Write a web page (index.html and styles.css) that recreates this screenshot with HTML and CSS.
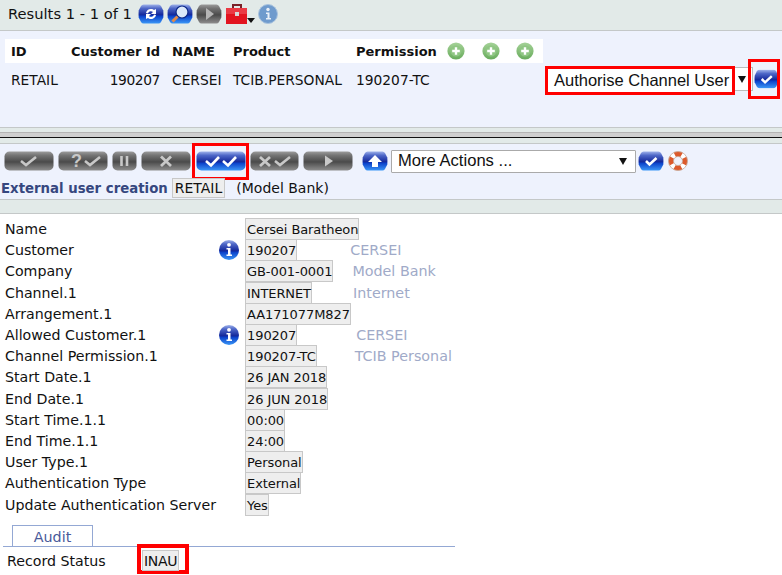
FILE: index.html
```html
<!DOCTYPE html>
<html lang="en">
<head>
    <meta charset="UTF-8">
    <title>External user creation</title>
    <link rel="stylesheet" href="styles.css">
</head>
<body>
    <svg class="defs" width="0" height="0">
        <defs>
            <linearGradient id="blueBtn" x1="0" y1="0" x2="0" y2="1">
                <stop offset="0" stop-color="#9fb2ea"/>
                <stop offset="0.2" stop-color="#4f68c8"/>
                <stop offset="0.55" stop-color="#12279a"/>
                <stop offset="0.6" stop-color="#0a3fc8"/>
                <stop offset="1" stop-color="#3b97f7"/>
            </linearGradient>
            <linearGradient id="greyBtn" x1="0" y1="0" x2="0" y2="1">
                <stop offset="0" stop-color="#9c9c9c"/>
                <stop offset="0.2" stop-color="#747474"/>
                <stop offset="0.55" stop-color="#4a4a4a"/>
                <stop offset="0.62" stop-color="#565656"/>
                <stop offset="1" stop-color="#8e8e8e"/>
            </linearGradient>
            <linearGradient id="greenBtn" x1="0" y1="0" x2="0" y2="1">
                <stop offset="0" stop-color="#a5d298"/>
                <stop offset="1" stop-color="#68ab5c"/>
            </linearGradient>
            <symbol id="hexBlue" viewBox="0 0 26 20">
                <path d="M5.500 0.500H20.500Q22 0.500 23 2L25.300 6.500Q25.600 10 25.300 13.500L23 18Q22 19.500 20.500 19.500H5.500Q4 19.500 3 18L0.700 13.500Q0.400 10 0.700 6.500L3 2Q4 0.500 5.500 0.500Z" fill="url(#blueBtn)"/>
            </symbol>
            <symbol id="hexGrey" viewBox="0 0 26 20">
                <path d="M5.500 0.500H20.500Q22 0.500 23 2L25.300 6.500Q25.600 10 25.300 13.500L23 18Q22 19.500 20.500 19.500H5.500Q4 19.500 3 18L0.700 13.500Q0.400 10 0.700 6.500L3 2Q4 0.500 5.500 0.500Z" fill="url(#greyBtn)"/>
            </symbol>
            <symbol id="plus" viewBox="0 0 18 18">
                <circle cx="9" cy="9" r="8.600" fill="url(#greenBtn)"/>
                <circle cx="9" cy="9" r="5.500" fill="#8fc683"/>
                <path d="M9 5.200V12.800M5.200 9H12.800" stroke="#fff" stroke-width="2.400"/>
            </symbol>
            <symbol id="infoBlue" viewBox="0 0 20 20">
                <circle cx="10" cy="10" r="10" fill="url(#blueBtn)"/>
                <circle cx="10" cy="4.800" r="1.900" fill="#fff"/>
                <path d="M7.500 8H11.500V14.500H13V16H7.500V14.500H9V9.500H7.500Z" fill="#fff"/>
            </symbol>
        </defs>
    </svg>

    <div class="results-bar">
        <span class="results-text">Results 1 - 1 of 1</span>
        <svg class="hex-icon" viewBox="0 0 26 20">
            <use href="#hexBlue"/>
            <path d="M8 9A5 5 0 0 1 16 6L18 5V10H13L15 8A3 3 0 0 0 10 9.500Z" fill="#fff"/>
            <path d="M18 11A5 5 0 0 1 10 14L8 15V10H13L11 12A3 3 0 0 0 16 10.500Z" fill="#fff"/>
        </svg>
        <svg class="hex-icon" viewBox="0 0 26 20">
            <use href="#hexBlue"/>
            <circle cx="15" cy="8" r="6" fill="#dbe8fa" stroke="#0d2a8a" stroke-width="1.200"/>
            <path d="M10.500 12.500L5.500 17.500" stroke="#e0894a" stroke-width="3"/>
        </svg>
        <svg class="hex-icon" viewBox="0 0 26 20">
            <use href="#hexGrey"/>
            <path d="M10 4L18 10L10 16Z" fill="#b5b5b5"/>
        </svg>
        <svg class="toolbox" viewBox="0 0 30 20">
            <path d="M7 4V1H15V4" fill="none" stroke="#7a2028" stroke-width="2"/>
            <rect x="0" y="4" width="21" height="16" fill="#e2141f"/>
            <rect x="0" y="4" width="21" height="6" fill="#ea3a44"/>
            <rect x="9" y="8" width="4" height="4" fill="#d9d9d9"/>
            <path d="M21 14H29L25 19Z" fill="#111"/>
        </svg>
        <svg class="info-pale" viewBox="0 0 20 20">
            <circle cx="10" cy="10" r="9.500" fill="#6f9bcd" stroke="#a9c3de"/>
            <circle cx="10" cy="5.500" r="1.700" fill="#e9f0f8"/>
            <path d="M8 8.500H11.500V14H13V15.500H8V14H9.500V10H8Z" fill="#e9f0f8"/>
        </svg>
    </div>

    <div class="list-panel">
        <table class="list-table">
            <tr class="list-head">
                <th class="col-id">ID</th>
                <th class="col-cust">Customer Id</th>
                <th class="col-name">NAME</th>
                <th class="col-prod">Product</th>
                <th class="col-perm">Permission</th>
                <th class="col-add">
                    <svg class="plus-icon" viewBox="0 0 18 18"><use href="#plus"/></svg>
                    <svg class="plus-icon" viewBox="0 0 18 18"><use href="#plus"/></svg>
                    <svg class="plus-icon" viewBox="0 0 18 18"><use href="#plus"/></svg>
                </th>
            </tr>
            <tr>
                <td>RETAIL</td>
                <td class="num">190207</td>
                <td>CERSEI</td>
                <td>TCIB.PERSONAL</td>
                <td>190207-TC</td>
                <td></td>
            </tr>
        </table>
        <div class="row-action">
            <div class="marked select-mark">
                <div class="channel-select">Authorise Channel User</div>
            </div>
            <div class="select-arrow"><span class="arrow"></span></div>
            <div class="marked go-mark">
                <svg class="hex-icon" viewBox="0 0 26 20">
                    <use href="#hexBlue"/>
                    <path d="M8 10L11.500 13.500L18.500 7" fill="none" stroke="#fff" stroke-width="2.600"/>
                </svg>
            </div>
        </div>
    </div>

    <div class="splitter">
        <div class="splitter-bar"></div>
    </div>

    <div class="tool-panel">
        <div class="tool-row">
            <svg class="pill w50" viewBox="0 0 50 20"><rect x="0.500" y="0.500" width="49" height="19" rx="5" fill="url(#greyBtn)"/><path d="M17 10L22 14L32 6" fill="none" stroke="#c8c8c8" stroke-width="2.600"/></svg>
            <svg class="pill w50" viewBox="0 0 50 20"><rect x="0.500" y="0.500" width="49" height="19" rx="5" fill="url(#greyBtn)"/><text x="13" y="15.500" class="pill-mark">?</text><path d="M27 10L32 14L42 6" fill="none" stroke="#c8c8c8" stroke-width="2.600"/></svg>
            <svg class="pill w25" viewBox="0 0 25 20"><rect x="0.500" y="0.500" width="24" height="19" rx="5" fill="url(#greyBtn)"/><path d="M9.500 5V15M15 5V15" stroke="#c8c8c8" stroke-width="2.600"/></svg>
            <svg class="pill w50" viewBox="0 0 50 20"><rect x="0.500" y="0.500" width="49" height="19" rx="5" fill="url(#greyBtn)"/><path d="M20 5.500L30 15M30 5.500L20 15" stroke="#c8c8c8" stroke-width="2.800"/></svg>
            <div class="marked pill-mark-box">
                <svg class="pill w50" viewBox="0 0 50 20"><rect x="0.500" y="0.500" width="49" height="19" rx="5" fill="url(#blueBtn)"/><path d="M10 10L15 14.500L23 6M27 10L32 14.500L40 6" fill="none" stroke="#fff" stroke-width="2.600"/></svg>
            </div>
            <svg class="pill w49" viewBox="0 0 49 20"><rect x="0.500" y="0.500" width="48" height="19" rx="5" fill="url(#greyBtn)"/><path d="M10 6L20 15M20 6L10 15" stroke="#c8c8c8" stroke-width="2.800"/><path d="M25 10L30 14L40 6" fill="none" stroke="#c8c8c8" stroke-width="2.600"/></svg>
            <svg class="pill w50" viewBox="0 0 50 20"><rect x="0.500" y="0.500" width="49" height="19" rx="5" fill="url(#greyBtn)"/><path d="M22 4.500L30 10L22 15.500Z" fill="#c8c8c8"/></svg>
            <svg class="hex-icon up-icon" viewBox="0 0 26 20">
                <use href="#hexBlue"/>
                <path d="M13 4L20 11H16V16H10V11H6Z" fill="#fff"/>
            </svg>
            <div class="more-select">
                <span>More Actions ...</span>
                <span class="arrow"></span>
            </div>
            <svg class="hex-icon confirm-icon" viewBox="0 0 26 20">
                <use href="#hexBlue"/>
                <path d="M8 10L11.500 13.500L18.500 7" fill="none" stroke="#fff" stroke-width="2.600"/>
            </svg>
            <svg class="ring" viewBox="0 0 20 20">
                <circle cx="10" cy="10" r="7" fill="none" stroke="#fff" stroke-width="5"/>
                <circle cx="10" cy="10" r="7" fill="none" stroke="#dc5a2c" stroke-width="5" stroke-dasharray="7 3.996" stroke-dashoffset="3.500"/>
                <circle cx="10" cy="10" r="9.500" fill="none" stroke="#c4a898" stroke-width="0.800"/>
                <circle cx="10" cy="10" r="4.500" fill="none" stroke="#c4a898" stroke-width="0.800"/>
            </svg>
        </div>
        <div class="title-row">
            <span class="page-title">External user creation</span>
            <span class="value-box">RETAIL</span>
            <span class="company">(Model Bank)</span>
        </div>
    </div>
    <div class="title-strip"></div>

    <div class="form-grid">
        <span class="field-label">Name</span><span></span><span class="field"><span class="value-box">Cersei Baratheon</span></span>
        <span class="field-label">Customer</span><svg class="info-icon" viewBox="0 0 20 20"><use href="#infoBlue"/></svg><span class="field"><span class="value-box">190207</span><span class="enrich gap-53">CERSEI</span></span>
        <span class="field-label">Company</span><span></span><span class="field"><span class="value-box">GB-001-0001</span><span class="enrich gap-19">Model Bank</span></span>
        <span class="field-label">Channel.1</span><span></span><span class="field"><span class="value-box">INTERNET</span><span class="enrich gap-41">Internet</span></span>
        <span class="field-label">Arrangement.1</span><span></span><span class="field"><span class="value-box">AA171077M827</span></span>
        <span class="field-label">Allowed Customer.1</span><svg class="info-icon" viewBox="0 0 20 20"><use href="#infoBlue"/></svg><span class="field"><span class="value-box">190207</span><span class="enrich gap-59">CERSEI</span></span>
        <span class="field-label">Channel Permission.1</span><span></span><span class="field"><span class="value-box">190207-TC</span><span class="enrich gap-38">TCIB Personal</span></span>
        <span class="field-label">Start Date.1</span><span></span><span class="field"><span class="value-box">26 JAN 2018</span></span>
        <span class="field-label">End Date.1</span><span></span><span class="field"><span class="value-box">26 JUN 2018</span></span>
        <span class="field-label">Start Time.1.1</span><span></span><span class="field"><span class="value-box">00:00</span></span>
        <span class="field-label">End Time.1.1</span><span></span><span class="field"><span class="value-box">24:00</span></span>
        <span class="field-label">User Type.1</span><span></span><span class="field"><span class="value-box">Personal</span></span>
        <span class="field-label">Authentication Type</span><span></span><span class="field"><span class="value-box">External</span></span>
        <span class="field-label">Update Authentication Server</span><span></span><span class="field"><span class="value-box">Yes</span></span>
    </div>

    <div class="tab-bar">
        <div class="tab">Audit</div>
    </div>
    <div class="audit-row">
        <span class="field-label audit-label">Record Status</span>
        <div class="marked status-mark"><span class="value-box">INAU</span></div>
    </div>
</body>
</html>
```

FILE: styles.css
```css
body {
    margin: 0;
    height: 575px;
    overflow: hidden;
    background-color: #fff;
    color: #111;
    font-family: "DejaVu Sans", Verdana, sans-serif;
    font-size: 14px;
    white-space: nowrap;
}
.defs {
    display: block;
    height: 0;
}
.results-bar {
    display: flex;
    align-items: center;
    gap: 3px;
    height: 31px;
    padding-left: 8px;
    padding-bottom: 3px;
    box-sizing: border-box;
    background-color: #e2eae8;
    border-bottom: 1px solid #c4c8c8;
}
.results-text {
    font-size: 14.7px;
    margin-right: 3px;
}
.hex-icon {
    width: 26px;
    height: 20px;
    flex: none;
}
.toolbox {
    width: 30px;
    height: 20px;
    margin-left: 1px;
    margin-right: -1px;
}
.info-pale {
    width: 20px;
    height: 20px;
}

/* list of matching records */
.list-panel {
    display: flex;
    align-items: flex-start;
    height: 97px;
    box-sizing: border-box;
    padding: 8px 0 0 5px;
    background-color: #eef2fd;
    border-bottom: 1px solid #c4c8c8;
}
.list-table {
    border-collapse: collapse;
    table-layout: fixed;
    width: 538px;
    flex: none;
}
.list-table th {
    background-color: #fff;
    height: 24px;
    text-align: left;
    padding: 0 0 0 6px;
    font-size: 13px;
    font-weight: bold;
}
.list-table td {
    height: 33px;
    padding: 0 0 0 6px;
    font-size: 13.8px;
}
.list-table .num {
    text-align: right;
    padding-right: 6px;
    letter-spacing: -0.4px;
}
.col-id { width: 54px; }
.col-cust { width: 95px; }
.col-name { width: 55px; }
.col-prod { width: 117px; }
.col-perm { width: 85px; }
.list-table .col-add {
    display: flex;
    align-items: center;
    gap: 16.5px;
}
.plus-icon {
    width: 18px;
    height: 18px;
    flex: none;
}
.row-action {
    display: flex;
    align-items: center;
    margin: 20px 0 0 2px;
}
.marked {
    border: 3px solid #f00;
    box-sizing: border-box;
    flex: none;
}
.select-mark {
    width: 190px;
    height: 29px;
    margin-top: 3px;
    background-color: #fff;
}
.channel-select {
    font-family: "Liberation Sans", Arial, sans-serif;
    font-size: 16.5px;
    line-height: 23px;
    padding-left: 6px;
    color: #111;
}
.select-arrow {
    display: flex;
    align-items: center;
    justify-content: center;
    width: 18px;
    height: 24px;
    flex: none;
    box-sizing: border-box;
    padding-right: 4px;
    background-color: #fff;
    border: 1px solid #bbb;
    border-left: none;
}
.arrow {
    width: 0;
    height: 0;
    border-left: 4px solid transparent;
    border-right: 4px solid transparent;
    border-top: 7px solid #111;
}
.go-mark {
    display: flex;
    align-items: center;
    width: 32px;
    height: 40px;
    margin-left: -5px;
    padding-left: 3px;
    overflow: hidden;
}
.go-mark .hex-icon {
    width: 25px;
}

/* drag bar between the list and the record */
.splitter {
    height: 16px;
    box-sizing: border-box;
    padding-top: 4px;
    background-color: #e2eae8;
    border-bottom: 1px solid #c4c8c8;
}
.splitter-bar {
    height: 6px;
    box-sizing: border-box;
    background-color: #cfcfcf;
    border-top: 1px solid #b4b4b4;
    border-bottom: 1px solid #111;
}

.tool-panel {
    height: 56px;
    box-sizing: border-box;
    background-color: #eef2fd;
    border-bottom: 1px solid #c4c8c8;
}
.tool-row {
    display: flex;
    align-items: center;
    gap: 4px;
    height: 34px;
    padding-left: 4px;
}
.pill {
    height: 20px;
    display: block;
    flex: none;
}
.w50 { width: 50px; }
.w49 { width: 49px; }
.w25 { width: 25px; }
.pill-mark {
    font-family: "Liberation Sans", Arial, sans-serif;
    font-size: 18px;
    font-weight: bold;
    fill: #c8c8c8;
}
.pill-mark-box {
    display: flex;
    align-items: center;
    justify-content: center;
    width: 57px;
    height: 37px;
    margin: 0 -3px;
}
.up-icon {
    margin-left: 5px;
    margin-right: -1px;
}
.more-select {
    display: flex;
    align-items: center;
    justify-content: space-between;
    flex: none;
    width: 245px;
    height: 23px;
    box-sizing: border-box;
    padding: 0 8px 0 6px;
    background-color: #fff;
    border: 1px solid #aaa;
    border-radius: 1px;
    font-family: "Liberation Sans", Arial, sans-serif;
    font-size: 16.6px;
}
.confirm-icon {
    margin-left: -2px;
}
.ring {
    width: 20px;
    height: 20px;
}
.title-row {
    display: flex;
    align-items: center;
    height: 20px;
    padding-left: 1px;
}
.page-title {
    color: #36477f;
    font-size: 13.3px;
    font-weight: bold;
    margin-right: 4px;
}
.title-row .value-box {
    height: 20px;
    line-height: 18px;
    padding: 0 2px;
    font-size: 14px;
    letter-spacing: 0;
}
.company {
    margin-left: 11px;
}
.title-strip {
    height: 14px;
    box-sizing: border-box;
    background-color: #e2eae8;
    border-bottom: 1px solid #c4c8c8;
}
.value-box {
    display: inline-block;
    box-sizing: border-box;
    height: 22px;
    line-height: 21px;
    padding: 0 0 0 1px;
    font-size: 13px;
    letter-spacing: -0.08px;
    background-color: #eee;
    border: 1px solid #c8c8c8;
}

/* record fields */
.form-grid {
    display: grid;
    grid-template-columns: 214px 26px 1fr;
    grid-auto-rows: 21.2px;
    align-items: center;
    padding: 4.5px 0 0 5px;
}
.field-label {
    font-size: 14.2px;
}
.info-icon {
    width: 20px;
    height: 20px;
}
.field {
    display: flex;
    align-items: center;
}
.enrich {
    color: #a0aac8;
    font-size: 14.3px;
}
.gap-53 { margin-left: 53px; }
.gap-19 { margin-left: 19px; }
.gap-41 { margin-left: 41px; }
.gap-59 { margin-left: 59px; }
.gap-38 { margin-left: 38px; }
.tab-bar {
    display: flex;
    margin: 9.5px 0 0 3px;
    width: 452px;
    padding-left: 9px;
    box-sizing: border-box;
    border-bottom: 1px solid #94a8d4;
}
.tab {
    width: 81px;
    height: 21px;
    box-sizing: border-box;
    text-align: center;
    line-height: 22px;
    font-size: 14.3px;
    color: #4a5a9a;
    background-color: #fff;
    border: 1px solid #94a8d4;
    border-bottom: none;
}
.audit-row {
    display: flex;
    align-items: center;
    margin-top: -3px;
    padding-left: 7px;
}
.audit-label {
    width: 130px;
    padding-top: 4px;
}
.status-mark {
    display: flex;
    align-items: flex-start;
    width: 52px;
    height: 30px;
    padding: 2px 0 0 1px;
    border-width: 4px;
    background-color: #fff;
}
.status-mark .value-box {
    height: 21px;
    line-height: 20px;
    padding-right: 1px;
    font-size: 14px;
    letter-spacing: -0.3px;
}
```
